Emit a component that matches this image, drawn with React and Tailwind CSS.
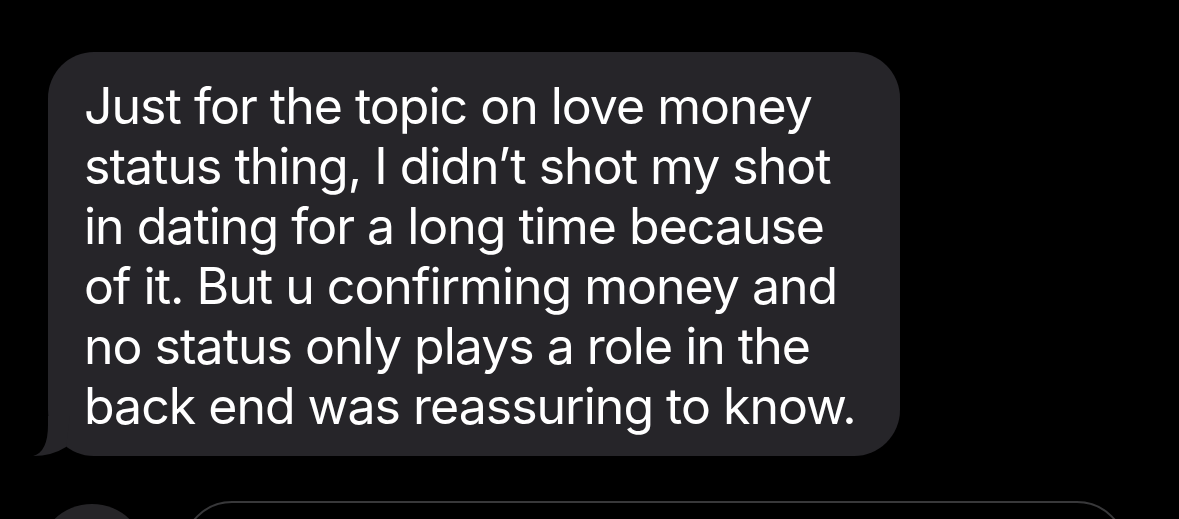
const lines = [
  'Just for the topic on love money',
  'status thing, I didn\u2019t shot my shot',
  'in dating for a long time because',
  'of it. But u confirming money and',
  'no status only plays a role in the',
  'back end was reassuring to know.',
];

// little hook on the bottom-left of an incoming bubble
const Tail = () => (
  <svg
    className="absolute bottom-0 left-[-15px] h-[40px] w-[40px]"
    viewBox="0 0 40 40"
    fill="#262529"
  >
    <path d="M15 0 L15 9 Q15 36 0 40 Q19 40 33 31 L37 0 Z" />
  </svg>
);

export default function App() {
  return (
    <div
      className="h-[519px] w-[1179px] overflow-hidden bg-black text-white"
      style={{ fontFamily: 'Inter, "Liberation Sans", sans-serif' }}
    >
      <div className="pl-[48px] pt-[52px]">
        <div className="relative h-[404px] w-[852px] rounded-[46px] bg-[#262529] pl-[36px] pt-[24px]">
          <Tail />
          <div className="relative text-[50px] leading-[60px] tracking-[-1px]">
            {lines.map((line) => (
              <div key={line} className="whitespace-nowrap">
                {line}
              </div>
            ))}
          </div>
        </div>
      </div>

      {/* composer row */}
      <div className="mt-[45px] flex items-start pl-[38px]">
        <div className="mt-[3px] h-[108px] w-[108px] shrink-0 rounded-full bg-[#262528]" />
        <div className="ml-[36px] h-[108px] w-[945px] rounded-[50px] border-2 border-[#38383a]" />
      </div>
    </div>
  );
}
